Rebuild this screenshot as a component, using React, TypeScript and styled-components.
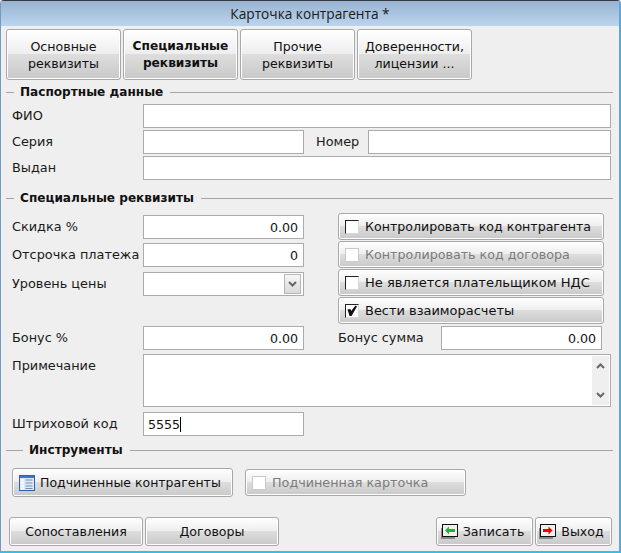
import React, { FunctionComponent } from 'react'
import styled, { createGlobalStyle } from 'styled-components'

const GlobalStyle = createGlobalStyle`
  html, body {
    margin: 0;
    padding: 0;
    background: #efefef;
  }
  body {
    font-family: "DejaVu Sans", Verdana, sans-serif;
    font-size: 12.6px;
    color: #111;
  }
`

const faceGradient = `linear-gradient(to bottom, #ffffff 0%, #eeeeee 48%, #dedede 48%, #c9c9c9 100%)`

const Window = styled.div`
  box-sizing: border-box;
  width: 621px;
  height: 553px;
  display: flex;
  flex-direction: column;
  background: #efefef;
  border-left: 1px solid #6f9bc8;
  border-right: 2px solid #5fa5d6;
  border-bottom: 2px solid #2cc4e4;
  border-top: 1px solid #33393f;
  border-radius: 4px 4px 0 0;
  overflow: hidden;
`

const TitleBar = styled.div`
  height: 25px;
  flex: none;
  display: flex;
  align-items: center;
  justify-content: center;
  background: linear-gradient(to bottom, #98b3d1, #bbd5ee);
  font-family: "Open Sans", sans-serif;
  font-size: 13.7px;
  color: #1a1a1a;
`

const Body = styled.div`
  flex: 1;
  display: flex;
  flex-direction: column;
  padding: 3px 4px 0 5px;
`

const Tabs = styled.div`
  display: flex;
  gap: 2px;
`

const Tab = styled.div<{ $active?: boolean }>`
  box-sizing: border-box;
  width: 115px;
  height: 51px;
  display: flex;
  align-items: center;
  justify-content: center;
  text-align: center;
  line-height: 17px;
  font-size: ${(p) => (p.$active ? '12.2px' : '12.6px')};
  font-weight: ${(p) => (p.$active ? 700 : 400)};
  border: 1px solid #a8a8a8;
  border-radius: 3px;
  box-shadow: inset 0 0 0 1px #fff;
  background: ${faceGradient};
`

const GroupTitle = styled.div<{ $inset: number; $top: number }>`
  display: flex;
  align-items: center;
  margin-top: ${(p) => p.$top}px;
  height: 14px;
  font-weight: 700;
  font-size: 12.1px;
  color: #111;

  &::before {
    content: '';
    flex: none;
    width: ${(p) => p.$inset}px;
    height: 1px;
    background: #a5a5a5;
    margin-right: 6px;
  }
  &::after {
    content: '';
    flex: 1;
    height: 1px;
    background: #a5a5a5;
    margin-left: 7px;
    margin-right: 2px;
  }
`

const Row = styled.div<{ $top: number }>`
  display: flex;
  align-items: center;
  margin-top: ${(p) => p.$top}px;
  padding-left: 6px;
`

const Label = styled.span<{ $width?: number; $alignTop?: boolean; $gap?: number }>`
  flex: none;
  width: ${(p) => p.$width ?? 131}px;
  white-space: nowrap;
  font-size: 12.85px;
  color: #1a1a1a;
  align-self: ${(p) => (p.$alignTop ? 'flex-start' : 'center')};
  margin-top: ${(p) => (p.$alignTop ? '4px' : '-2px')};
  margin-left: ${(p) => p.$gap ?? 0}px;
`

const Field = styled.div<{ $width: number; $height?: number; $right?: boolean }>`
  box-sizing: border-box;
  flex: none;
  position: relative;
  width: ${(p) => p.$width}px;
  height: ${(p) => p.$height ?? 24}px;
  display: flex;
  align-items: center;
  justify-content: ${(p) => (p.$right ? 'flex-end' : 'flex-start')};
  padding: 0 5px 0 4px;
  background: #fff;
  border: 1px solid #ababab;
  color: #111;
`

const Caret = styled.span`
  display: inline-block;
  width: 1px;
  height: 15px;
  background: #000;
`

const Split = styled.div`
  display: flex;
  margin-top: 8px;
`

const LeftCol = styled.div`
  width: 300px;
  flex: none;
`

const RightCol = styled.div`
  display: flex;
  flex-direction: column;
  gap: 1px;
  margin-left: 32px;
`

const CheckButton = styled.div<{
  $disabled?: boolean
  $width?: number
  $height?: number
  $size?: number
  $gap?: number
}>`
  box-sizing: border-box;
  width: ${(p) => p.$width ?? 266}px;
  height: ${(p) => p.$height ?? 27}px;
  display: flex;
  align-items: center;
  padding-left: 6px;
  gap: ${(p) => p.$gap ?? 6}px;
  white-space: nowrap;
  font-size: ${(p) => p.$size ?? 12.6}px;
  border: 1px solid #a8a8a8;
  border-radius: 3px;
  box-shadow: inset 0 0 0 1px #fff;
  background: ${faceGradient};
  color: ${(p) => (p.$disabled ? '#7c7c7c' : '#111')};
`

const Box = styled.span<{ $disabled?: boolean }>`
  box-sizing: border-box;
  flex: none;
  width: 14px;
  height: 14px;
  display: flex;
  background: #fff;
  border-style: solid;
  border-width: 1px;
  border-color: ${(p) => (p.$disabled ? '#c9c9c9' : '#222 #d8d8d8 #d8d8d8 #222')};
`

const SelectArrow = styled.span`
  position: absolute;
  right: 2px;
  top: 1px;
  box-sizing: border-box;
  width: 17px;
  height: 20px;
  display: flex;
  align-items: center;
  justify-content: center;
  border: 1px solid #b5b5b5;
  background: linear-gradient(to bottom, #f6f6f6, #d9d9d9);
`

const ScrollTrack = styled.div`
  position: absolute;
  right: 1px;
  top: 1px;
  bottom: 1px;
  width: 17px;
  display: flex;
  flex-direction: column;
  justify-content: space-between;
  align-items: center;
  padding: 7px 0;
  box-sizing: border-box;
  background: #efefef;
`

const ToolRow = styled.div`
  display: flex;
  align-items: center;
  gap: 12px;
  margin-top: 11px;
  padding-left: 6px;
`

const Footer = styled.div`
  display: flex;
  margin-top: 20px;
  padding-left: 3px;
  padding-right: 3px;
`

const ActionButton = styled.div<{ $width: number; $pushRight?: boolean; $icon?: boolean }>`
  box-sizing: border-box;
  width: ${(p) => p.$width}px;
  height: 29px;
  display: flex;
  align-items: center;
  justify-content: center;
  gap: 5px;
  padding-right: ${(p) => (p.$icon ? 4 : 0)}px;
  margin-left: ${(p) => (p.$pushRight ? 'auto' : '2px')};
  border: 1px solid #a8a8a8;
  border-radius: 3px;
  box-shadow: inset 0 0 0 1px #fff;
  background: ${faceGradient};
  color: #111;

  &:first-child {
    margin-left: 0;
  }
`

const Chevron: FunctionComponent<{ up?: boolean }> = ({ up }) => (
  <svg width="9" height="6" viewBox="0 0 9 6">
    <path
      d={up ? 'M1 5 L4.5 1.5 L8 5' : 'M1 1 L4.5 4.5 L8 1'}
      fill="none"
      stroke="#666"
      strokeWidth="2"
    />
  </svg>
)

const Tick = () => (
  <svg width="12" height="12" viewBox="0 0 12 12">
    <path d="M1.5 4.5 L4.5 4 L5.2 6 L9.5 0.5 L11 1.5 L5.5 11 L3.5 11 Z" fill="#111" />
  </svg>
)

const TableIcon = () => (
  <svg width="16" height="16" viewBox="0 0 16 16">
    <rect x="0.5" y="0.5" width="15" height="15" fill="#dce8f7" stroke="#2a62b8" />
    <rect x="1" y="1" width="14" height="2" fill="#3d78cc" />
    <path d="M2 5h3M2 8h3M2 11h3M2 13.5h3" stroke="#fff" strokeWidth="1.5" />
    <path d="M6.5 5h7M6.5 8h7M6.5 11h7M6.5 13.5h7" stroke="#7c8ea6" strokeWidth="1.2" />
  </svg>
)

const DoorIcon: FunctionComponent<{ color: string; left?: boolean }> = ({ color, left }) => (
  <svg width="17" height="15" viewBox="0 0 17 15">
    <path d="M0 4 H2 V13 H14 V15 H0 Z" fill="#8a8a8a" />
    <rect x="1.5" y="0.5" width="15" height="12" fill="#eef2ee" stroke="#111" />
    <path
      d={
        left
          ? 'M4 6.5 L8 2.5 L8 5 L14 5 L14 8 L8 8 L8 10.5 Z'
          : 'M13.5 6.5 L9.5 2.5 L9.5 5 L4 5 L4 8 L9.5 8 L9.5 10.5 Z'
      }
      fill={color}
    />
  </svg>
)

const App: FunctionComponent = () => (
  <Window>
    <GlobalStyle />
    <TitleBar>Карточка контрагента *</TitleBar>
    <Body>
      <Tabs>
        <Tab>Основные<br />реквизиты</Tab>
        <Tab $active>Специальные<br />реквизиты</Tab>
        <Tab>Прочие<br />реквизиты</Tab>
        <Tab>Доверенности,<br />лицензии ...</Tab>
      </Tabs>

      <GroupTitle $inset={8} $top={5}>Паспортные данные</GroupTitle>
      <Row $top={5}>
        <Label>ФИО</Label>
        <Field $width={468} />
      </Row>
      <Row $top={2}>
        <Label>Серия</Label>
        <Field $width={161} />
        <Label $width={52} $gap={12}>Номер</Label>
        <Field $width={243} />
      </Row>
      <Row $top={2}>
        <Label>Выдан</Label>
        <Field $width={468} />
      </Row>

      <GroupTitle $inset={8} $top={11}>Специальные реквизиты</GroupTitle>
      <Split>
        <LeftCol>
          <Row $top={2}>
            <Label>Скидка %</Label>
            <Field $width={161} $right>0.00</Field>
          </Row>
          <Row $top={4}>
            <Label>Отсрочка платежа</Label>
            <Field $width={161} $right>0</Field>
          </Row>
          <Row $top={5}>
            <Label>Уровень цены</Label>
            <Field $width={161}>
              <SelectArrow><Chevron /></SelectArrow>
            </Field>
          </Row>
        </LeftCol>
        <RightCol>
          <CheckButton><Box />Контролировать код контрагента</CheckButton>
          <CheckButton $disabled $size={12.7}><Box $disabled />Контролировать код договора</CheckButton>
          <CheckButton $size={13.05}><Box />Не является плательщиком НДС</CheckButton>
          <CheckButton $size={12.95}><Box><Tick /></Box>Вести взаиморасчеты</CheckButton>
        </RightCol>
      </Split>
      <Row $top={2}>
        <Label>Бонус %</Label>
        <Field $width={161} $right>0.00</Field>
        <Label $width={103} $gap={34}>Бонус сумма</Label>
        <Field $width={161} $right>0.00</Field>
      </Row>
      <Row $top={4}>
        <Label $alignTop>Примечание</Label>
        <Field $width={468} $height={53}>
          <ScrollTrack>
            <Chevron up />
            <Chevron />
          </ScrollTrack>
        </Field>
      </Row>
      <Row $top={5}>
        <Label>Штриховой код</Label>
        <Field $width={161}>5555<Caret /></Field>
      </Row>

      <GroupTitle $inset={17} $top={7}>Инструменты</GroupTitle>
      <ToolRow>
        <CheckButton $width={221} $height={29} $gap={5} $size={12.5}><TableIcon />Подчиненные контрагенты</CheckButton>
        <CheckButton $width={221} $disabled $size={12.75}><Box $disabled />Подчиненная карточка</CheckButton>
      </ToolRow>
      <Footer>
        <ActionButton $width={134}>Сопоставления</ActionButton>
        <ActionButton $width={134}>Договоры</ActionButton>
        <ActionButton $width={97} $pushRight $icon><DoorIcon color="#20b040" left />Записать</ActionButton>
        <ActionButton $width={77} $icon><DoorIcon color="#f00000" />Выход</ActionButton>
      </Footer>
    </Body>
  </Window>
)

export default App
